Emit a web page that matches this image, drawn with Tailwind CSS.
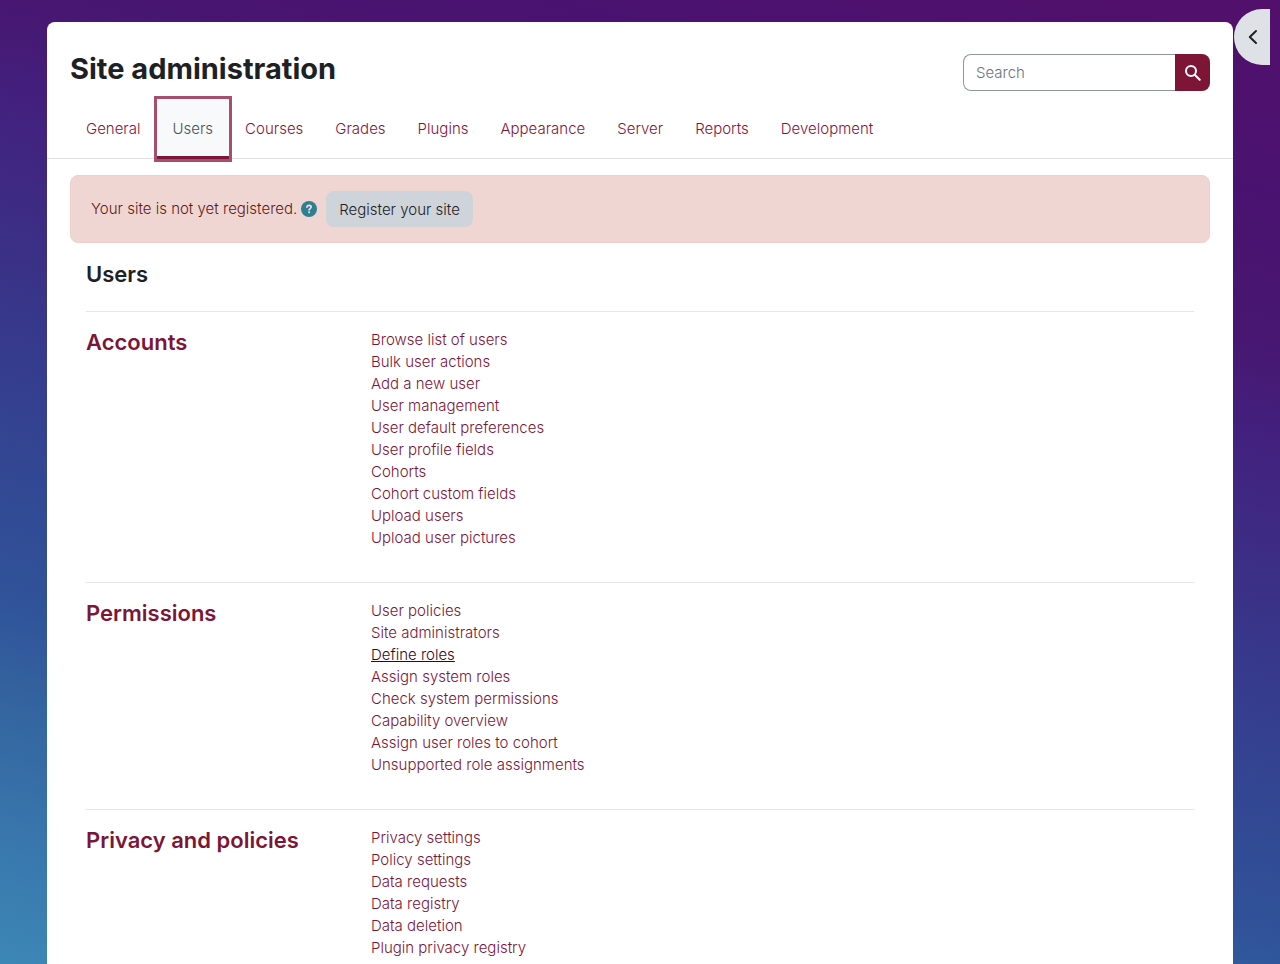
<!DOCTYPE html>
<html lang="en">
<head>
<meta charset="utf-8">
<meta name="viewport" content="width=device-width, initial-scale=1">
<title>Site administration</title>
<script src="https://cdn.jsdelivr.net/npm/@tailwindcss/browser@4"></script>
</head>
<body class="h-screen overflow-hidden bg-[linear-gradient(195deg,#52106b_0%,#4a1270_15%,#471771_26%,#422280_35%,#3d2c83_42%,#37378b_50%,#334592_60%,#30539a_72%,#34659f_80%,#3875ab_89%,#3c87b5_100%)] font-['Inter','Liberation_Sans',sans-serif] text-[15px] leading-[22px] font-light text-[#1d2125]">
<button type="button" aria-label="Open block drawer" class="fixed top-[9px] right-[10px] flex h-14 w-9 items-center justify-center rounded-l-full bg-[#dee2e6]">
  <svg class="size-4" viewBox="0 0 16 16" fill="none" stroke="#1d2125" stroke-width="2" stroke-linecap="round" stroke-linejoin="round" aria-hidden="true"><path d="M12 2 5.800 8l6.200 6"/></svg>
</button>
<div class="mx-[47px] mt-[22px] min-h-screen rounded-t-lg bg-white">
  <header class="flex items-start justify-between px-[23px] pt-7">
    <h1 class="pt-px text-[29px] leading-9 font-bold">Site administration</h1>
    <form class="mt-1 flex h-[37px] w-[247px]" role="search">
      <input type="search" aria-label="Search" placeholder="Search" class="min-w-0 flex-1 rounded-l-lg border border-r-0 border-[#8f959e] px-3 placeholder:text-[#6a737b]">
      <button type="submit" aria-label="Search" class="flex w-[35px] items-center justify-center rounded-r-lg bg-[#7d1537]">
        <svg class="size-4" viewBox="0 0 16 16" fill="none" stroke="#fff" stroke-width="2" stroke-linecap="round" aria-hidden="true"><circle cx="6" cy="6" r="5"/><path d="m10 10 4.700 4.700"/></svg>
      </button>
    </form>
  </header>
  <nav aria-label="Site administration" class="flex h-[68px] items-end border-b border-[#dee2e6] px-[23px] text-[#84133a]">
    <a href="#" class="flex h-15 items-center px-4 pt-px">General</a>
    <a href="#" aria-current="page" class="relative -mb-px flex h-15 items-center border-b-3 border-[#7d1537] bg-[#f8f9fb] px-4 pt-[3px] text-[#495057] outline-3 outline-[#a44f6b]">Users</a>
    <a href="#" class="flex h-15 items-center px-4 pt-px">Courses</a>
    <a href="#" class="flex h-15 items-center px-4 pt-px">Grades</a>
    <a href="#" class="flex h-15 items-center px-4 pt-px">Plugins</a>
    <a href="#" class="flex h-15 items-center px-4 pt-px">Appearance</a>
    <a href="#" class="flex h-15 items-center px-4 pt-px">Server</a>
    <a href="#" class="flex h-15 items-center px-4 pt-px">Reports</a>
    <a href="#" class="flex h-15 items-center px-4 pt-px">Development</a>
  </nav>
  <main class="px-[23px] pt-4">
    <div role="alert" class="flex h-[68px] items-center rounded-lg border border-[#edcfcb] bg-[#f0d6d3] px-5 text-[#5d1a15]">
      <span>Your site is not yet registered.</span>
      <button type="button" aria-label="Help with registration" class="ml-1">
        <svg class="size-4" viewBox="0 0 16 16" aria-hidden="true"><circle cx="8" cy="8" r="8" fill="#2f7f92"/><path d="M5.900 6.200c.1-1.200 1-1.800 2.200-1.800 1.300 0 2.100.7 2.100 1.700 0 1.400-2.100 1.500-2.100 2.800" fill="none" stroke="#f3e2e0" stroke-width="1.600" stroke-linecap="round"/><circle cx="8.100" cy="11.300" r="1" fill="#f3e2e0"/></svg>
      </button>
      <button type="button" class="ml-[9px] h-9 rounded-lg bg-[#ced4da] px-[13px] pt-0.5 text-[#1d2125]">Register your site</button>
    </div>
    <div class="px-4">
      <h2 class="pt-4 pb-[22px] text-[22px] leading-[30px] font-semibold">Users</h2>
      <section class="flex border-t border-[#e5e7ea] pt-[17px] pb-[33px]">
        <h3 class="w-[285px] shrink-0 text-[22px] leading-[26px] font-semibold text-[#7d1537]"><a href="#">Accounts</a></h3>
        <ul class="text-[#7d1537]">
          <li><a href="#">Browse list of users</a></li>
          <li><a href="#">Bulk user actions</a></li>
          <li><a href="#">Add a new user</a></li>
          <li><a href="#">User management</a></li>
          <li><a href="#">User default preferences</a></li>
          <li><a href="#">User profile fields</a></li>
          <li><a href="#">Cohorts</a></li>
          <li><a href="#">Cohort custom fields</a></li>
          <li><a href="#">Upload users</a></li>
          <li><a href="#">Upload user pictures</a></li>
        </ul>
      </section>
      <section class="flex border-t border-[#e5e7ea] pt-[17px] pb-[33px]">
        <h3 class="w-[285px] shrink-0 text-[22px] leading-[26px] font-semibold text-[#7d1537]"><a href="#">Permissions</a></h3>
        <ul class="text-[#7d1537]">
          <li><a href="#">User policies</a></li>
          <li><a href="#">Site administrators</a></li>
          <li><a href="#" class="text-[#340917] underline">Define roles</a></li>
          <li><a href="#">Assign system roles</a></li>
          <li><a href="#">Check system permissions</a></li>
          <li><a href="#">Capability overview</a></li>
          <li><a href="#">Assign user roles to cohort</a></li>
          <li><a href="#">Unsupported role assignments</a></li>
        </ul>
      </section>
      <section class="flex border-t border-[#e5e7ea] pt-[17px] pb-[33px]">
        <h3 class="w-[285px] shrink-0 text-[22px] leading-[26px] font-semibold text-[#7d1537]"><a href="#">Privacy and policies</a></h3>
        <ul class="text-[#7d1537]">
          <li><a href="#">Privacy settings</a></li>
          <li><a href="#">Policy settings</a></li>
          <li><a href="#">Data requests</a></li>
          <li><a href="#">Data registry</a></li>
          <li><a href="#">Data deletion</a></li>
          <li><a href="#">Plugin privacy registry</a></li>
        </ul>
      </section>
    </div>
  </main>
</div>
</body>
</html>
